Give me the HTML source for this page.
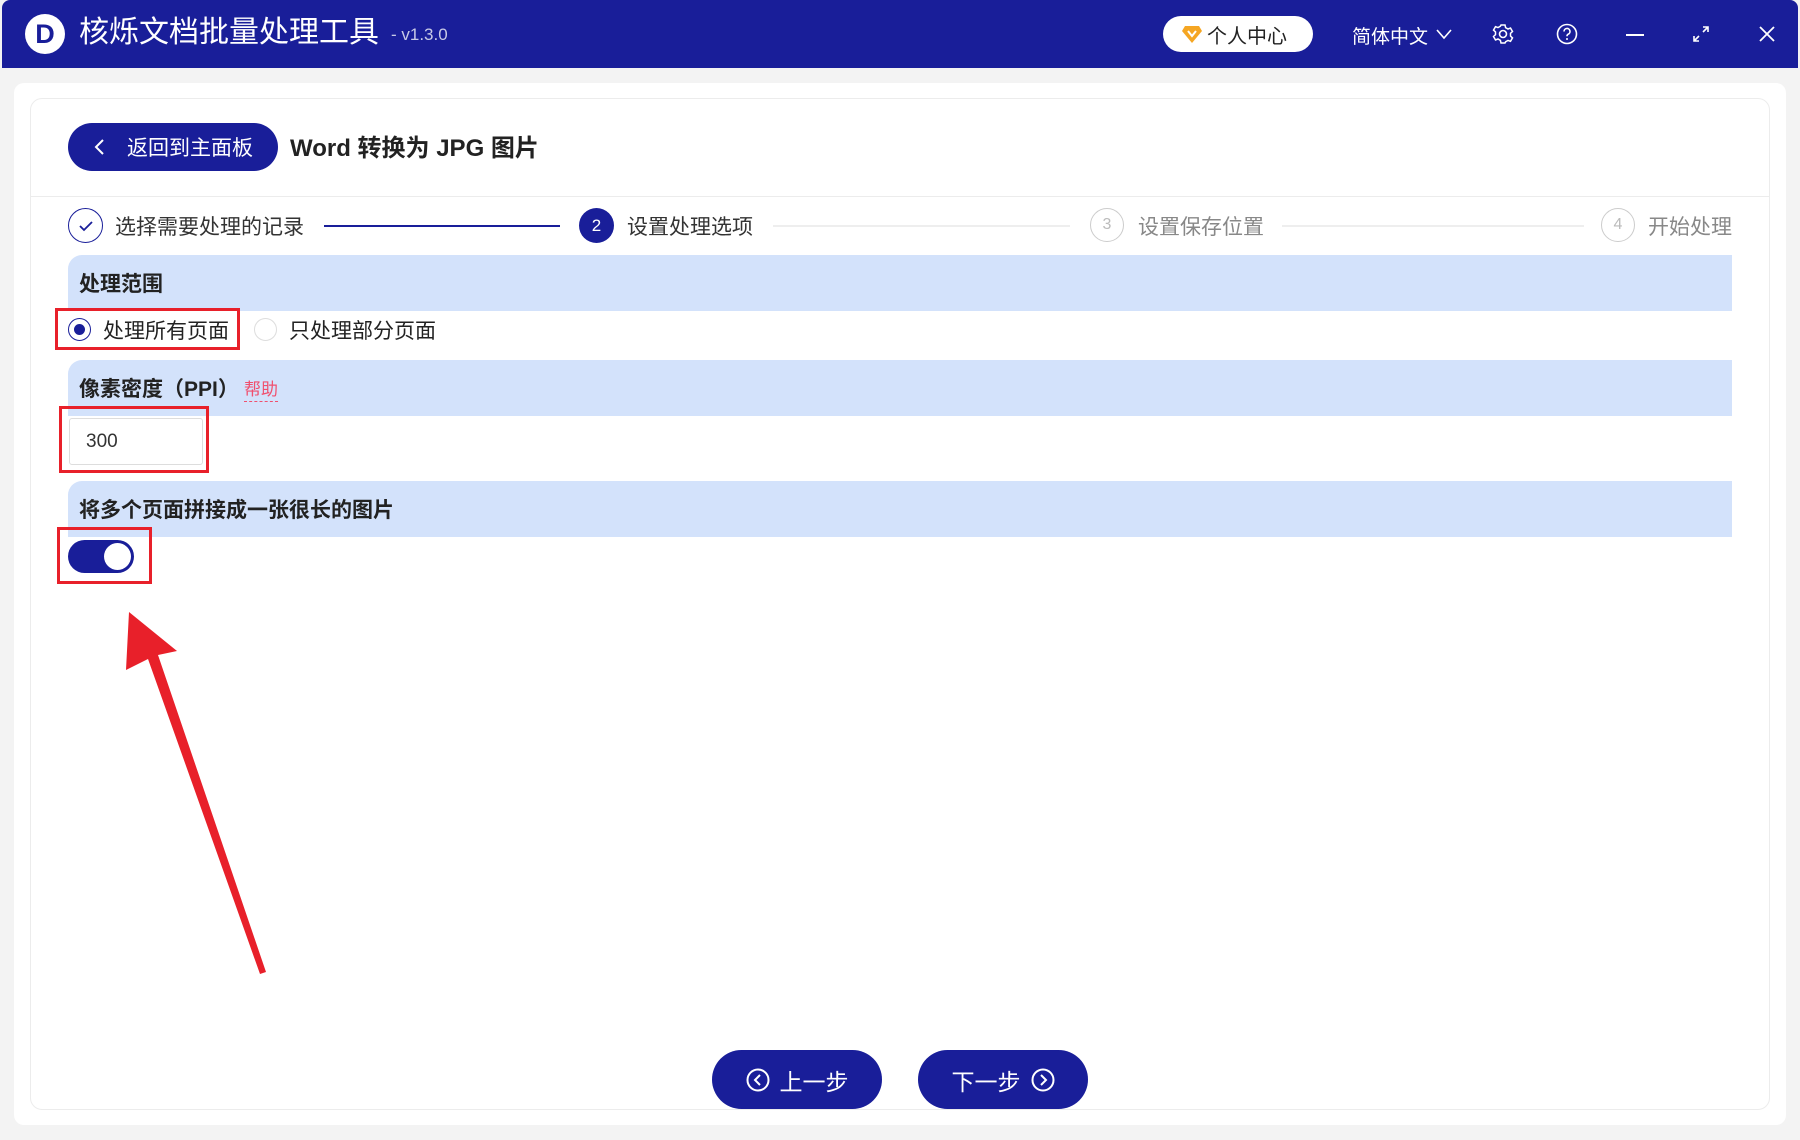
<!DOCTYPE html>
<html><head><meta charset="utf-8"><style>
*{margin:0;padding:0;box-sizing:border-box}
body{width:1800px;height:1140px;background:#f3f3f3;font-family:"Liberation Sans","Noto Sans CJK SC",sans-serif;position:relative;overflow:hidden;color:#222}
.a{position:absolute}
.bar{left:2px;top:0;width:1796px;height:68px;background:#191e99;border-radius:8px 8px 0 0}
.hdr{background:#d3e2fb;border-radius:14px 0 0 0;left:68px;width:1664px;height:56px}
.hdr span{position:absolute;left:11px;top:13px;font-size:21px;font-weight:bold;color:#222}
.red{border:3px solid #e8202a}
.btn{background:#191e99;border-radius:30px;color:#fff;font-size:23px;display:flex;align-items:center;justify-content:center;gap:10px}
.sc{width:34px;height:34px;border-radius:50%;border:1.5px solid #ccc;color:#bbb;font-size:16px;display:flex;align-items:center;justify-content:center;top:208px}
.st{top:211px;font-size:21px;color:#888}
</style></head><body>
<div class="a bar"></div>
<div class="a" style="left:25px;top:14px;width:40px;height:40px;border-radius:50%;background:#fff"></div>
<div class="a" style="left:25px;top:14px;width:40px;height:40px;font:bold 27px 'Liberation Sans';color:#191e99;text-align:center;line-height:40px">D</div>
<div class="a" style="left:79px;top:14px;font-size:30px;color:#fff;line-height:38px">核烁文档批量处理工具</div>
<div class="a" style="left:391px;top:25px;font-size:17px;color:#c8cae6">- v1.3.0</div>
<div class="a" style="left:1163px;top:16px;width:150px;height:36px;background:#fff;border-radius:18px"></div>
<svg class="a" style="left:1182px;top:25px" width="20" height="18" viewBox="0 0 20 18"><path d="M3 1h14l3 5-10 12L0 6z" fill="#f5a623"/><path d="M6 6l4 5 4-5" stroke="#fff" stroke-width="2" fill="none"/></svg>
<div class="a" style="left:1207px;top:20px;font-size:20px;color:#222">个人中心</div>
<div class="a" style="left:1352px;top:22px;font-size:19px;color:#fff">简体中文</div>
<svg class="a" style="left:1436px;top:28px" width="16" height="12"><path d="M1 2l7 8 7-8" stroke="#fff" stroke-width="1.6" fill="none"/></svg>
<svg class="a" style="left:1492px;top:23px" width="22" height="22" viewBox="0 0 22 22"><circle cx="11" cy="11" r="3.5" stroke="#fff" stroke-width="1.6" fill="none"/><path d="M9 2h4l.6 2.6 2.4 1.4 2.5-.9 2 3.4-2 1.8v2.8l2 1.8-2 3.4-2.5-.9-2.4 1.4L13 20H9l-.6-2.6L6 16l-2.5.9-2-3.4 2-1.8V8.9l-2-1.8 2-3.4L6 4.6 8.4 3.2z" stroke="#fff" stroke-width="1.5" fill="none"/></svg>
<svg class="a" style="left:1556px;top:23px" width="22" height="22"><circle cx="11" cy="11" r="9.5" stroke="#fff" stroke-width="1.6" fill="none"/><path d="M8 8.5a3 3 0 1 1 4 2.8c-.8.4-1 1-1 2" stroke="#fff" stroke-width="1.6" fill="none"/><circle cx="11" cy="16" r="1" fill="#fff"/></svg>
<div class="a" style="left:1626px;top:34px;width:18px;height:2px;background:#fff"></div>
<svg class="a" style="left:1692px;top:25px" width="18" height="18"><path d="M11 2h5v5M16 2l-5 5M7 16H2v-5M2 16l5-5" stroke="#fff" stroke-width="1.6" fill="none"/></svg>
<svg class="a" style="left:1758px;top:25px" width="18" height="18"><path d="M2 2l14 14M16 2L2 16" stroke="#fff" stroke-width="1.8"/></svg>

<div class="a" style="left:14px;top:83px;width:1772px;height:1042px;background:#fff;border-radius:10px"></div>
<div class="a" style="left:30px;top:98px;width:1740px;height:1012px;border:1px solid #ececec;border-radius:12px"></div>
<div class="a" style="left:31px;top:196px;width:1738px;height:1px;background:#ececec"></div>

<div class="a btn" style="left:68px;top:123px;width:210px;height:48px;font-size:21px;gap:22px"><svg width="12" height="18"><path d="M10 2L3 9l7 7" stroke="#fff" stroke-width="2" fill="none"/></svg>返回到主面板</div>
<div class="a" style="left:290px;top:128px;font-size:24px;font-weight:bold;color:#222">Word 转换为 JPG 图片</div>

<div class="a" style="left:68px;top:208px;width:35px;height:35px;border-radius:50%;border:1.5px solid #191e99"></div>
<svg class="a" style="left:76px;top:216px" width="20" height="20"><path d="M4 10l4 4 8-8" stroke="#191e99" stroke-width="1.8" fill="none"/></svg>
<div class="a st" style="left:115px;color:#333">选择需要处理的记录</div>
<div class="a" style="left:324px;top:225px;width:236px;height:2px;background:#191e99"></div>
<div class="a" style="left:579px;top:208px;width:35px;height:35px;border-radius:50%;background:#191e99;color:#fff;font-size:17px;text-align:center;line-height:35px">2</div>
<div class="a st" style="left:627px;color:#333">设置处理选项</div>
<div class="a" style="left:773px;top:225px;width:297px;height:2px;background:#eee"></div>
<div class="a sc" style="left:1090px">3</div>
<div class="a st" style="left:1138px">设置保存位置</div>
<div class="a" style="left:1282px;top:225px;width:302px;height:2px;background:#eee"></div>
<div class="a sc" style="left:1601px">4</div>
<div class="a st" style="left:1648px">开始处理</div>

<div class="a hdr" style="top:255px"><span>处理范围</span></div>
<div class="a red" style="left:55px;top:308px;width:185px;height:42px"></div>
<div class="a" style="left:68px;top:318px;width:23px;height:23px;border-radius:50%;border:1.5px solid #191e99"></div>
<div class="a" style="left:74px;top:324px;width:11px;height:11px;border-radius:50%;background:#191e99"></div>
<div class="a" style="left:103px;top:315px;font-size:21px;color:#222">处理所有页面</div>
<div class="a" style="left:254px;top:318px;width:23px;height:23px;border-radius:50%;border:1.5px solid #ddd"></div>
<div class="a" style="left:289px;top:315px;font-size:21px;color:#222">只处理部分页面</div>

<div class="a hdr" style="top:360px"><span>像素密度（PPI）</span></div>
<div class="a" style="left:244px;top:379px;font-size:17px;color:#f0506e;border-bottom:1px dashed #f0506e;line-height:22px">帮助</div>
<div class="a" style="left:69px;top:418px;width:134px;height:47px;border:1px solid #ddd;border-radius:3px;background:#fff;font-size:19px;padding:12px 0 0 16px;color:#333">300</div>
<div class="a red" style="left:59px;top:406px;width:150px;height:67px"></div>

<div class="a hdr" style="top:481px"><span>将多个页面拼接成一张很长的图片</span></div>
<div class="a" style="left:68px;top:540px;width:66px;height:33px;border-radius:17px;background:#191e99"></div>
<div class="a" style="left:104px;top:543px;width:27px;height:27px;border-radius:50%;background:#fff"></div>
<div class="a red" style="left:57px;top:527px;width:95px;height:57px"></div>

<svg class="a" style="left:0;top:0" width="1800" height="1140"><path d="M129 612L177 651L158 655L266 972L260 974L148 659L126 670Z" fill="#e8202a"/></svg>

<div class="a btn" style="left:712px;top:1050px;width:170px;height:59px"><svg width="24" height="24"><circle cx="12" cy="12" r="10.5" stroke="#fff" stroke-width="2" fill="none"/><path d="M14 7l-5 5 5 5" stroke="#fff" stroke-width="2" fill="none"/></svg>上一步</div>
<div class="a btn" style="left:918px;top:1050px;width:170px;height:59px">下一步<svg width="24" height="24"><circle cx="12" cy="12" r="10.5" stroke="#fff" stroke-width="2" fill="none"/><path d="M10 7l5 5-5 5" stroke="#fff" stroke-width="2" fill="none"/></svg></div>
</body></html>
